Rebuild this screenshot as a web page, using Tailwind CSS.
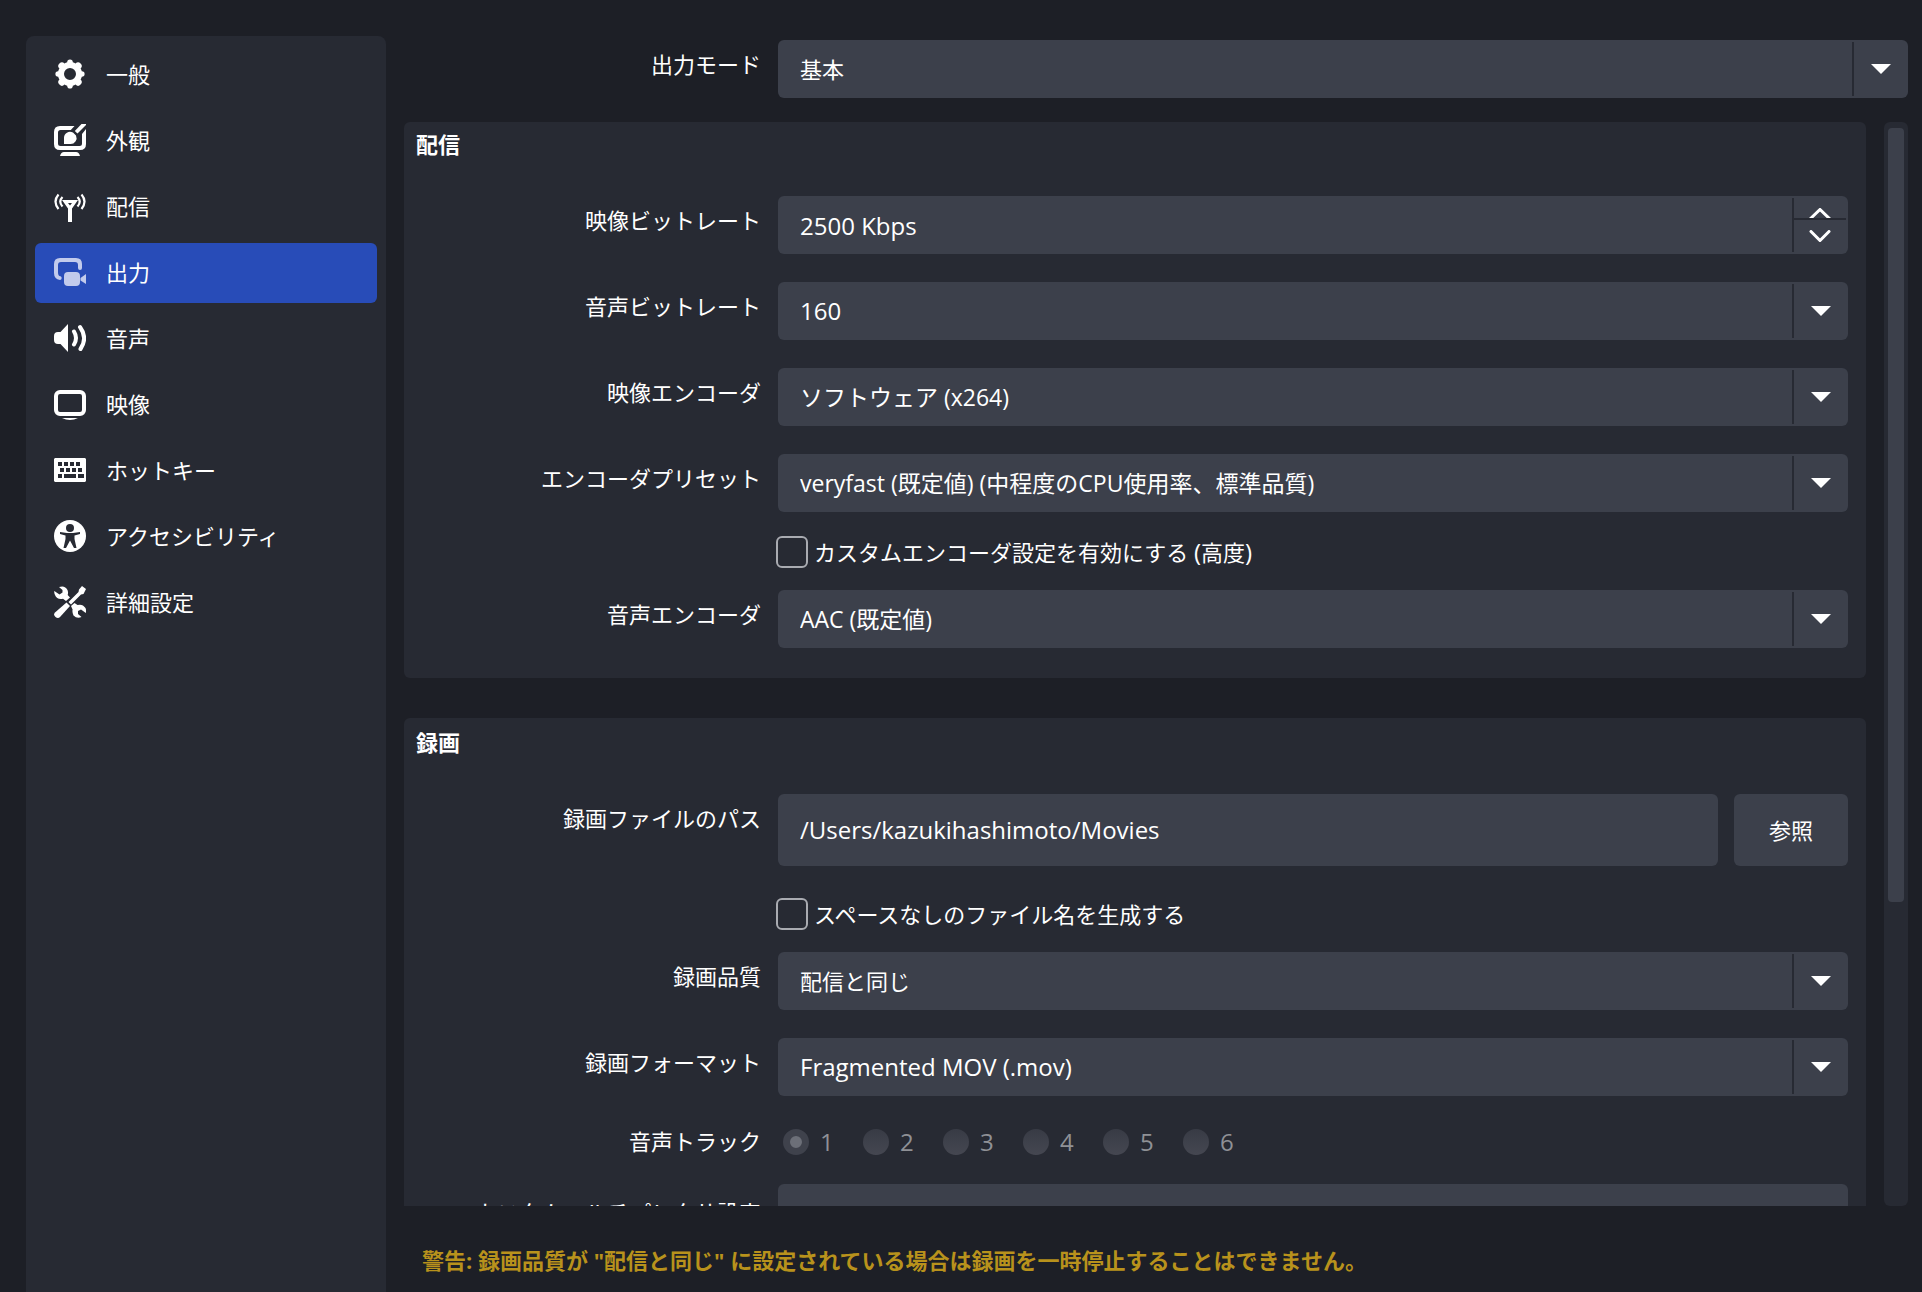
<!DOCTYPE html>
<html lang="ja">
<head>
<meta charset="utf-8">
<title>設定 - 出力</title>
<script src="https://cdn.jsdelivr.net/npm/@tailwindcss/browser@4"></script>
</head>
<body class="flex h-screen overflow-hidden bg-[#1d1f26] font-['Open_Sans','Noto_Sans_CJK_JP',sans-serif] text-[22px] leading-8 text-white">

<nav class="ml-[26px] mt-9 w-[360px] shrink-0 rounded-t-lg bg-[#272a33] px-[9px] pt-[9px]" aria-label="設定">
  <ul class="flex flex-col gap-[6px]">
    <li><a href="#general" class="flex h-[60px] items-center gap-5 rounded-md pb-[2px] pl-[19px]">
      <svg class="size-8" viewBox="0 0 32 32" fill="#fff"><path fill-rule="evenodd" d="M13.2 4.2A2.8 2.8 0 0 1 18.800 4.200A12.100 12.100 0 0 1 21.500 5.400A2.800 2.800 0 0 1 26.600 10.500A12.100 12.100 0 0 1 27.800 13.200A2.800 2.800 0 0 1 27.800 18.800A12.100 12.100 0 0 1 26.600 21.500A2.800 2.800 0 0 1 21.500 26.600A12.100 12.100 0 0 1 18.800 27.800A2.800 2.800 0 0 1 13.200 27.800A12.100 12.100 0 0 1 10.500 26.600A2.800 2.800 0 0 1 5.400 21.500A12.100 12.100 0 0 1 4.200 18.800A2.800 2.800 0 0 1 4.200 13.200A12.100 12.100 0 0 1 5.400 10.500A2.800 2.800 0 0 1 10.500 5.400A12.100 12.100 0 0 1 13.200 4.200ZM16 10a6 6 0 1 0 0 12a6 6 0 0 0 0-12Z"/></svg>
      <span>一般</span></a></li>
    <li><a href="#appearance" class="flex h-[60px] items-center gap-5 rounded-md pb-[2px] pl-[19px]">
      <svg class="size-8" viewBox="0 0 32 32" fill="#fff"><path d="M6 2H20.500L16.800 6H6.500Q4 6 4 8.500V19.500Q4 22 6.500 22H25.500Q28 22 28 19.500V10L32 5V20Q32 26 26 26H6Q0 26 0 20V8Q0 2 6 2Z"/><path d="M27.500 0H32V1L23.500 9.500L20.800 7Z"/><path d="M10 20V14A6 6 0 0 1 19 8.600L22 11.500A6 6 0 0 1 16 20Z"/><path d="M6 32Q7 28 10 28H22Q25 28 26 32Z"/></svg>
      <span>外観</span></a></li>
    <li><a href="#stream" class="flex h-[60px] items-center gap-5 rounded-md pb-[2px] pl-[19px]">
      <svg class="size-8" viewBox="0 -2 32 32" fill="none" stroke="#fff"><path d="M4.500 2.500Q-1.500 9.500 4.500 17M27.500 2.500Q33.500 9.500 27.500 17M8.500 5Q4 9.500 8.500 14.500M23.500 5Q28 9.500 23.500 14.500" stroke-width="2.200"/><path d="M8 8H24L18 16.500V30H14V16.500ZM14 11H18L16 13.500Z" fill="#fff" fill-rule="evenodd" stroke="none"/></svg>
      <span>配信</span></a></li>
    <li><a href="#output" aria-current="page" class="flex h-[60px] items-center gap-5 rounded-md bg-[#284cb8] pb-[2px] pl-[19px]">
      <svg class="size-8" viewBox="0 -1 32 32" fill="#c2cbec"><path d="M6 1H22Q28 1 28 7V11A2 2 0 0 1 24 11V8Q24 5 21 5H7Q4 5 4 8V15.500Q4 19 6.500 19.200A2 2 0 0 1 6 23Q0 22 0 16V7Q0 1 6 1Z"/><rect x="10" y="15" width="16" height="14" rx="4"/><path d="M26.500 21L32 17V27L26.500 23.500Z"/></svg>
      <span>出力</span></a></li>
    <li><a href="#audio" class="flex h-[60px] items-center gap-5 rounded-md pb-[2px] pl-[19px]">
      <svg class="size-8" viewBox="0 0 32 32" fill="#fff"><path d="M14 2V30L6.500 22H4Q0 22 0 18V14Q0 10 4 10H6.500Z"/><path d="M20 9.500Q24 16 20 22.500M26 5Q34 16 26.500 27" fill="none" stroke="#fff" stroke-width="4" stroke-linecap="round"/></svg>
      <span>音声</span></a></li>
    <li><a href="#video" class="flex h-[60px] items-center gap-5 rounded-md pb-[2px] pl-[19px]">
      <svg class="size-8" viewBox="0 0 32 32" fill="none"><rect x="2" y="4" width="28" height="22" rx="4" stroke="#fff" stroke-width="4"/><path d="M8 30H24Q20 32 16 32T8 30Z" fill="#fff"/></svg>
      <span>映像</span></a></li>
    <li><a href="#hotkeys" class="flex h-[60px] items-center gap-5 rounded-md pb-[2px] pl-[19px]">
      <svg class="size-8" viewBox="0 0 32 32" fill="#fff"><path fill-rule="evenodd" d="M1 4H31L32 5V27L31 28H1L0 27V5ZM4 8V12H8V8ZM10 8V12H14V8ZM16 8V12H20V8ZM22 8V12H26V8ZM6 14V18H10V14ZM12 14V18H16V14ZM18 14V18H22V14ZM24 14V18H28V14ZM4 20V24H8V20ZM10 20V24H22V20ZM24 20V24H30V20Z"/></svg>
      <span>ホットキー</span></a></li>
    <li><a href="#accessibility" class="flex h-[60px] items-center gap-5 rounded-md pb-[2px] pl-[19px]">
      <svg class="size-8" viewBox="0 0 32 32"><circle cx="16" cy="16" r="16" fill="#fff"/><circle cx="16" cy="8" r="4" fill="#272a33"/><path d="M6 12L13 13H19L26 12V14L20.500 15.500V19L22.500 28H20L16 20.500L12 28H9.500L11.500 19V15.500L6 14Z" fill="#272a33"/></svg>
      <span>アクセシビリティ</span></a></li>
    <li><a href="#advanced" class="flex h-[60px] items-center gap-5 rounded-md pb-[2px] pl-[19px]">
      <svg class="size-8" viewBox="0 0 32 32" fill="#fff"><path d="M5 1Q11 -1 13.500 4Q14.500 6.500 13.700 9L16 11.500L12 15L9 12.800Q3 14 1 9Q0 7 .3 5L5.500 8.500L8.500 6.500V4Z"/><path d="M28 0L32 3L29.500 8L27 8.500L17 18.500L14.500 16L24.500 6L25 3.500Z"/><path d="M12.500 16.500L16 20L6 31Q4 33 1.500 31T1 26.500Z"/><path d="M17 20L20.500 17L23.500 19Q28.500 17.500 31.500 22Q32.500 24.500 31.800 27L27 23.500L24 25V28L27.500 31Q23 33 19.500 29.500Q18 26.500 18.600 23.500Z"/></svg>
      <span>詳細設定</span></a></li>
  </ul>
</nav>

<main class="flex min-w-0 flex-1 flex-col pl-[18px] pr-[14px] pt-10">
  <div class="grid grid-cols-[357px_1fr] gap-x-[17px]">
    <label for="mode" class="pt-2 text-right">出力モード</label>
    <div class="relative h-[58px]">
      <select id="mode" class="size-full appearance-none rounded-md bg-[#3c404b] pl-[22px]"><option>基本</option></select>
      <span class="pointer-events-none absolute inset-y-[2px] right-0 flex w-14 items-center justify-center border-l-2 border-[#272a33]"><svg class="h-2.5 w-5" viewBox="0 0 20 10" fill="#fff"><path d="M0 0H20L10 10Z"/></svg></span>
    </div>
  </div>

  <div class="mt-6 flex min-h-0 flex-1 justify-between">
    <div class="flex min-w-0 flex-1 flex-col gap-10 overflow-y-auto pr-[18px] [scrollbar-width:none]">

      <section class="shrink-0 rounded-md bg-[#272a33] pb-[30px] pr-[18px]">
        <h2 class="pl-3 pt-1.5 font-bold">配信</h2>
        <div class="mt-9 grid grid-cols-[357px_1fr] gap-x-[17px] gap-y-7">
          <label for="vbr" class="pt-2 text-right">映像ビットレート</label>
          <div class="relative h-[58px]">
            <input id="vbr" type="text" value="2500 Kbps" class="size-full rounded-md bg-[#3c404b] pl-[22px] text-2xl">
            <div class="absolute inset-y-[2px] right-[2px] flex w-[54px] flex-col border-l-2 border-[#272a33]">
              <button type="button" aria-label="増やす" class="flex h-[22px] items-end justify-center border-b-2 border-[#272a33]"><svg class="h-2.5 w-[22px]" viewBox="0 0 22 10" fill="none" stroke="#fff" stroke-width="3"><path d="M0 12L11 1.500L22 12"/></svg></button>
              <button type="button" aria-label="減らす" class="flex flex-1 justify-center pt-2.5"><svg class="h-3 w-[22px]" viewBox="0 0 22 12" fill="none" stroke="#fff" stroke-width="3" stroke-linecap="round"><path d="M2 1.500L11 10.500L20 1.500"/></svg></button>
            </div>
          </div>
          <label for="abr" class="pt-2 text-right">音声ビットレート</label>
          <div class="relative h-[58px]">
            <select id="abr" class="size-full appearance-none rounded-md bg-[#3c404b] pl-[22px] text-2xl"><option>160</option></select>
            <span class="pointer-events-none absolute inset-y-[2px] right-0 flex w-14 items-center justify-center border-l-2 border-[#272a33]"><svg class="h-2.5 w-5" viewBox="0 0 20 10" fill="#fff"><path d="M0 0H20L10 10Z"/></svg></span>
          </div>
          <label for="venc" class="pt-2 text-right">映像エンコーダ</label>
          <div class="relative h-[58px]">
            <select id="venc" class="size-full appearance-none rounded-md bg-[#3c404b] pl-[22px] text-[23px]"><option>ソフトウェア (x264)</option></select>
            <span class="pointer-events-none absolute inset-y-[2px] right-0 flex w-14 items-center justify-center border-l-2 border-[#272a33]"><svg class="h-2.5 w-5" viewBox="0 0 20 10" fill="#fff"><path d="M0 0H20L10 10Z"/></svg></span>
          </div>
          <label for="preset" class="pt-2 text-right">エンコーダプリセット</label>
          <div class="relative h-[58px]">
            <select id="preset" class="size-full appearance-none rounded-md bg-[#3c404b] pl-[22px] text-[23px]"><option>veryfast (既定値) (中程度のCPU使用率、標準品質)</option></select>
            <span class="pointer-events-none absolute inset-y-[2px] right-0 flex w-14 items-center justify-center border-l-2 border-[#272a33]"><svg class="h-2.5 w-5" viewBox="0 0 20 10" fill="#fff"><path d="M0 0H20L10 10Z"/></svg></span>
          </div>
          <label class="col-start-2 -my-1 -ml-[2px] flex h-8 items-center gap-1.5"><input type="checkbox" class="size-8 appearance-none rounded-md border-2 border-[#a9abb1]"><span>カスタムエンコーダ設定を有効にする <span class="text-2xl">(</span>高度<span class="text-2xl">)</span></span></label>
          <label for="aenc" class="-mt-[2px] pt-2 text-right">音声エンコーダ</label>
          <div class="relative -mt-[2px] h-[58px]">
            <select id="aenc" class="size-full appearance-none rounded-md bg-[#3c404b] pl-[22px] text-[23px]"><option>AAC (既定値)</option></select>
            <span class="pointer-events-none absolute inset-y-[2px] right-0 flex w-14 items-center justify-center border-l-2 border-[#272a33]"><svg class="h-2.5 w-5" viewBox="0 0 20 10" fill="#fff"><path d="M0 0H20L10 10Z"/></svg></span>
          </div>
        </div>
      </section>

      <section class="shrink-0 rounded-md bg-[#272a33] pb-[30px] pr-[18px]">
        <h2 class="pl-3 pt-2 font-bold">録画</h2>
        <div class="mt-9 grid grid-cols-[357px_1fr] gap-x-[17px] gap-y-7">
          <label for="path" class="pt-2 text-right">録画ファイルのパス</label>
          <div class="flex h-[72px] gap-4">
            <input id="path" type="text" value="/Users/kazukihashimoto/Movies" class="min-w-0 flex-1 rounded-md bg-[#3c404b] pl-[22px] text-2xl">
            <button type="button" class="w-[114px] rounded-md bg-[#3c404b]">参照</button>
          </div>
          <label class="col-start-2 -mb-[6px] -ml-[2px] mt-1 flex h-8 items-center gap-1.5"><input type="checkbox" class="size-8 appearance-none rounded-md border-2 border-[#a9abb1]"><span>スペースなしのファイル名を生成する</span></label>
          <label for="quality" class="pt-2 text-right">録画品質</label>
          <div class="relative h-[58px]">
            <select id="quality" class="size-full appearance-none rounded-md bg-[#3c404b] pl-[22px]"><option>配信と同じ</option></select>
            <span class="pointer-events-none absolute inset-y-[2px] right-0 flex w-14 items-center justify-center border-l-2 border-[#272a33]"><svg class="h-2.5 w-5" viewBox="0 0 20 10" fill="#fff"><path d="M0 0H20L10 10Z"/></svg></span>
          </div>
          <label for="format" class="pt-2 text-right">録画フォーマット</label>
          <div class="relative h-[58px]">
            <select id="format" class="size-full appearance-none rounded-md bg-[#3c404b] pl-[22px] text-2xl"><option>Fragmented MOV (.mov)</option></select>
            <span class="pointer-events-none absolute inset-y-[2px] right-0 flex w-14 items-center justify-center border-l-2 border-[#272a33]"><svg class="h-2.5 w-5" viewBox="0 0 20 10" fill="#fff"><path d="M0 0H20L10 10Z"/></svg></span>
          </div>
          <span id="tracks" class="text-right leading-[34px]">音声トラック</span>
          <div role="radiogroup" aria-labelledby="tracks" class="flex h-9 items-center pl-[5px] text-2xl text-[#8f9196]">
            <label class="flex w-20 items-center gap-[11px]"><input type="radio" name="track" checked disabled class="size-[26px] appearance-none rounded-full border-[7px] border-[#3f424c] bg-[#6c6f78]">1</label>
            <label class="flex w-20 items-center gap-[11px]"><input type="radio" name="track" disabled class="size-[26px] appearance-none rounded-full bg-linear-to-b from-[#383b45] to-[#454751]">2</label>
            <label class="flex w-20 items-center gap-[11px]"><input type="radio" name="track" disabled class="size-[26px] appearance-none rounded-full bg-linear-to-b from-[#383b45] to-[#454751]">3</label>
            <label class="flex w-20 items-center gap-[11px]"><input type="radio" name="track" disabled class="size-[26px] appearance-none rounded-full bg-linear-to-b from-[#383b45] to-[#454751]">4</label>
            <label class="flex w-20 items-center gap-[11px]"><input type="radio" name="track" disabled class="size-[26px] appearance-none rounded-full bg-linear-to-b from-[#383b45] to-[#454751]">5</label>
            <label class="flex w-20 items-center gap-[11px]"><input type="radio" name="track" disabled class="size-[26px] appearance-none rounded-full bg-linear-to-b from-[#383b45] to-[#454751]">6</label>
          </div>
          <label for="muxer" class="-mt-1 pt-3 text-right">カスタムマルチプレクサ設定</label>
          <input id="muxer" type="text" class="-mt-1 h-[58px] w-full rounded-md bg-[#3c404b] pl-[22px] text-2xl">
        </div>
      </section>
    </div>

    <div class="w-6 shrink-0 rounded-md bg-[#272a33] px-1 py-[6px]"><div class="h-[72.2%] rounded bg-[#3c404b]"></div></div>
  </div>

  <p class="flex h-[86px] items-center pb-2 pt-[30px] pl-[18px] font-bold text-[#b8921c]">警告: 録画品質が "配信と同じ" に設定されている場合は録画を一時停止することはできません。</p>
</main>
</body>
</html>
